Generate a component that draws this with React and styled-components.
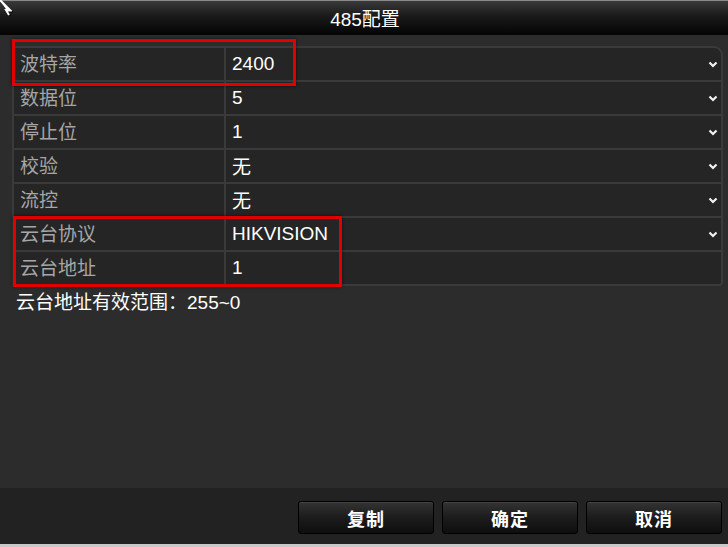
import React from "react";
import styled, { createGlobalStyle } from "styled-components";

const Global = createGlobalStyle`
  html, body {
    margin: 0;
    padding: 0;
    background: #2c2c2c;
  }
  body {
    font-family: "Liberation Sans", "Noto Sans CJK SC", sans-serif;
  }
`;

// --- Styled Components ---
const Window = styled.div`
  position: relative;
  width: 728px;
  height: 547px;
  display: flex;
  flex-direction: column;
  background: #2c2c2c;
  overflow: hidden;
`;

const TitleBar = styled.div`
  height: 33px;
  border-top: 1px solid #8a8a8a;
  border-bottom: 1px solid #050505;
  background: linear-gradient(#3a3a3a 0%, #1a1a1a 45%, #050505 100%);
  display: flex;
  align-items: center;
  justify-content: center;
  color: #fff;
  font-size: 19px;
  font-family: "Liberation Sans", "Noto Sans CJK SC", sans-serif;
  padding-left: 2px;
`;

const Cursor = styled.svg`
  position: absolute;
  left: 0;
  top: 0;
`;

const Body = styled.div`
  position: relative;
  flex: 1;
  padding: 11px 5px 0 12px;
  background: #2c2c2c;
`;

const Table = styled.div`
  border: 2px solid #3a3a3a;
  border-top-right-radius: 9px;
  border-bottom-right-radius: 4px;
  background: #252525;
`;

const Row = styled.div`
  display: grid;
  grid-template-columns: 212px 1fr 24px;
  height: 32px;
  border-top: ${(p) => (p.$first ? "none" : "2px solid #3a3a3a")};
`;

const Label = styled.div`
  display: flex;
  align-items: center;
  padding: 0 0 3px 6px;
  color: #a6a6a6;
  font-size: 19px;
  font-family: "Noto Sans CJK SC", sans-serif;
  border-right: 2px solid #3a3a3a;
`;

const Value = styled.div`
  display: flex;
  align-items: center;
  padding: 0 0 1px 6px;
  color: #fff;
  font-size: 19px;
  font-family: "Liberation Sans", "Noto Sans CJK SC", sans-serif;
`;

const Arrow = styled.div`
  display: flex;
  align-items: center;
  justify-content: flex-start;
  padding-left: 11px;
`;

const Note = styled.div`
  margin-top: 1px;
  padding-left: 4px;
  color: #fff;
  font-size: 19px;
  font-family: "Liberation Sans", "Noto Sans CJK SC", sans-serif;
`;

const Mark = styled.div`
  position: absolute;
  border: 3px solid #e00000;
  box-shadow: 0 0 3px rgba(0, 0, 0, 0.6);
  pointer-events: none;
`;

const Footer = styled.div`
  height: 59px;
  background: #222222;
  border-bottom: 3px solid #c8c8c8;
  display: flex;
  justify-content: flex-end;
  align-items: flex-start;
  gap: 8px;
  padding: 13px 6px 0 0;
  box-sizing: border-box;
`;

const Button = styled.button`
  width: 136px;
  height: 33px;
  border: 1px solid #000;
  border-radius: 3px;
  background: linear-gradient(#333333 0%, #1c1c1c 50%, #0e0e0e 100%);
  box-shadow: inset 0 1px 0 #444;
  color: #fff;
  font-size: 18px;
  font-weight: bold;
  font-family: "Noto Sans CJK SC", sans-serif;
  letter-spacing: 1px;
  padding: 0;
`;

const rows = [
  { label: "波特率", value: "2400", select: true },
  { label: "数据位", value: "5", select: true },
  { label: "停止位", value: "1", select: true },
  { label: "校验", value: "无", select: true },
  { label: "流控", value: "无", select: true },
  { label: "云台协议", value: "HIKVISION", select: true },
  { label: "云台地址", value: "1", select: false },
];

function Chevron() {
  return (
    <svg width="10" height="7" viewBox="0 0 10 7">
      <path d="M1.5 1.5 L5 5 L8.5 1.5" fill="none" stroke="#f2f2f2" strokeWidth="2.2" />
    </svg>
  );
}

function App() {
  return (
    <Window>
      <Global />
      <TitleBar>485配置</TitleBar>
      <Cursor width="14" height="16" viewBox="0 0 14 16">
        <path d="M-2 -2 L13 12 L8 12 L11 16" fill="#fff" stroke="#000" strokeWidth="1" />
        <path d="M0 0 L10 10 L6 10 L9 15" fill="none" stroke="#fff" strokeWidth="2" />
      </Cursor>

      <Body>
        <Table>
          {rows.map((r, i) => (
            <Row key={r.label} $first={i === 0}>
              <Label>{r.label}</Label>
              <Value>{r.value}</Value>
              <Arrow>{r.select && <Chevron />}</Arrow>
            </Row>
          ))}
        </Table>
        <Note>云台地址有效范围：255~0</Note>

        <Mark style={{ left: 12, top: 4, width: 278, height: 41 }} />
        <Mark style={{ left: 13, top: 181, width: 323, height: 65 }} />
      </Body>

      <Footer>
        <Button>复制</Button>
        <Button>确定</Button>
        <Button>取消</Button>
      </Footer>
    </Window>
  );
}

export default App;
